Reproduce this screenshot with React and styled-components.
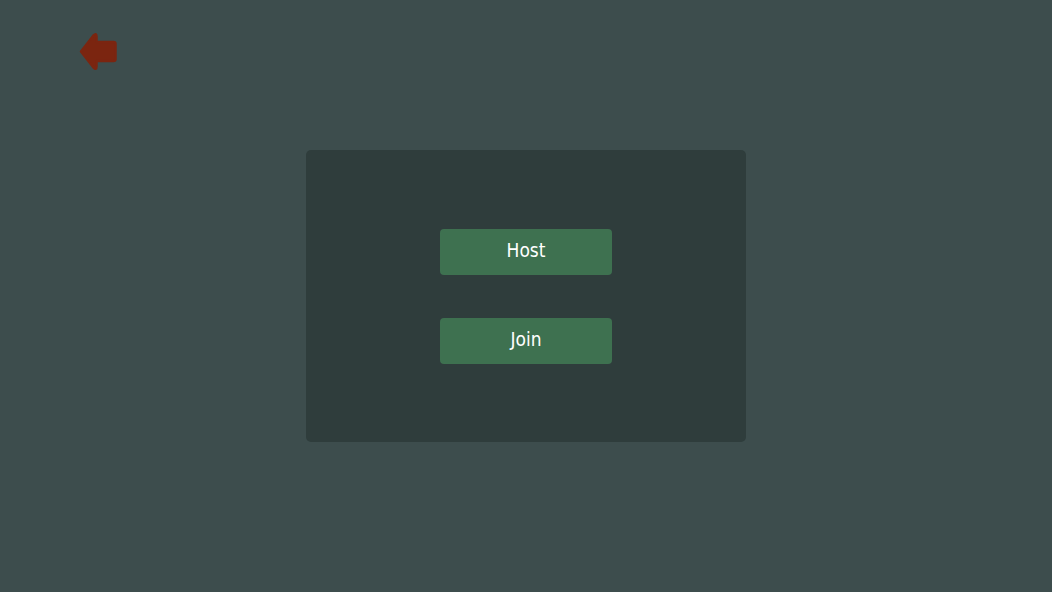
import styled, { createGlobalStyle } from 'styled-components';

const GlobalStyle = createGlobalStyle`
  html, body {
    margin: 0;
    padding: 0;
    background: #3d4d4d;
  }
  * {
    box-sizing: border-box;
  }
`;

//전체 화면
const Screen = styled.div`
  position: relative;
  width: 100vw;
  height: 100vh;
  display: flex;
  align-items: center;
  justify-content: center;
  font-family: "DejaVu Sans Condensed", "DejaVu Sans", Tahoma, sans-serif;
`;

//뒤로가기
const BackButton = styled.button`
  position: absolute;
  left: 78px;
  top: 31px;
  width: 41px;
  height: 41px;
  padding: 0;
  border: none;
  background: transparent;
  cursor: pointer;
  display: block;
`;

const Panel = styled.div`
  width: 440px;
  height: 292px;
  background: #2f3d3c;
  border-radius: 5px;
  display: flex;
  flex-direction: column;
  align-items: center;
  justify-content: center;
  gap: 43px;
`;

const MenuButton = styled.button`
  width: 172px;
  height: 46px;
  border: none;
  border-radius: 4px;
  background: ${props => props.bg || '#3e7150'};
  color: #ffffff;
  font-family: inherit;
  font-size: 19px;
  padding: 0 0 4px 0;
  cursor: pointer;
`;

const BackArrow = () => (
    <svg width="41" height="41" viewBox="0 0 41 41">
        <path
            d="M3 20.5 L15.5 4.5 Q18.5 1.5 18.5 5.5 L18.5 11 L35.5 11 Q37.5 11 37.5 13 L37.5 28 Q37.5 30 35.5 30 L18.5 30 L18.5 35.5 Q18.5 39.5 15.5 36.5 Z"
            fill="#7b2510"
            stroke="#7b2510"
            strokeWidth="2.5"
            strokeLinejoin="round"
        />
    </svg>
);

const App = () => {
    return (
        <>
            <GlobalStyle />
            <Screen>
                <BackButton aria-label="back">
                    <BackArrow />
                </BackButton>
                <Panel>
                    <MenuButton>Host</MenuButton>
                    <MenuButton>Join</MenuButton>
                </Panel>
            </Screen>
        </>
    );
};

export default App;
